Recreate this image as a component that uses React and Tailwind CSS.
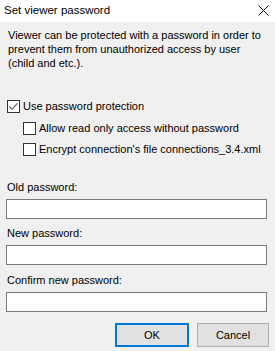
const CheckBox = ({ checked }) => (
  <div className="w-[13px] h-[13px] border border-[#333333] bg-white flex items-center justify-center shrink-0">
    {checked && (
      <svg width="11" height="11" viewBox="0 0 11 11">
        <path d="M1.5 5.5 L4.2 8.3 L9.5 2.2" fill="none" stroke="#555555" strokeWidth="1.1" />
      </svg>
    )}
  </div>
);

const Field = ({ label, className }) => (
  <div className={className}>
    <div className="h-[15px] leading-[15px] pl-[7px]">{label}</div>
    <div className="mt-[4px] ml-[6px] w-[261px] h-[20px] border border-[#7a7a7a] bg-white" />
  </div>
);

export default function App() {
  return (
    <div
      className="w-[275px] h-[351px] bg-[#f0f0f0] text-[11px] text-black overflow-hidden whitespace-nowrap"
      style={{ fontFamily: '"Liberation Sans", Arial, sans-serif' }}
    >
      <div className="h-[22px] bg-white flex items-center justify-between pl-[4px] pr-[6px] text-[11.5px]">
        <span>Set viewer password</span>
        <svg width="11" height="11" viewBox="0 0 11 11" className="mt-[-2px]">
          <path d="M0.5 0.5 L10.5 10.5 M10.5 0.5 L0.5 10.5" stroke="#111" strokeWidth="1" />
        </svg>
      </div>

      <p className="pt-[6px] px-[8px] leading-[14px]">
        Viewer can be protected with a password in order to
        <br />
        prevent them from unauthorized access by user
        <br />
        (child and etc.).
      </p>

      <div className="mt-[26px]">
        <div className="h-[21px] flex items-center pl-[7px] gap-[3px]">
          <CheckBox checked />
          <span>Use password protection</span>
        </div>
        <div className="h-[22px] flex items-center pl-[23px] gap-[3px]">
          <CheckBox />
          <span>Allow read only access without password</span>
        </div>
        <div className="h-[21px] flex items-center pl-[23px] gap-[3px]">
          <CheckBox />
          <span>Encrypt connection's file connections_3.4.xml</span>
        </div>
      </div>

      <Field label="Old password:" className="mt-[20px]" />
      <Field label="New password:" className="mt-[7px]" />
      <Field label="Confirm new password:" className="mt-[8px]" />

      <div className="mt-[11px] flex justify-end gap-[8px] pr-[6px]">
        <button className="w-[74px] h-[24px] bg-[#e1e1e1] border-2 border-[#0078d7]">OK</button>
        <button className="w-[72px] h-[24px] bg-[#e1e1e1] border border-[#adadad]">Cancel</button>
      </div>
    </div>
  );
}
